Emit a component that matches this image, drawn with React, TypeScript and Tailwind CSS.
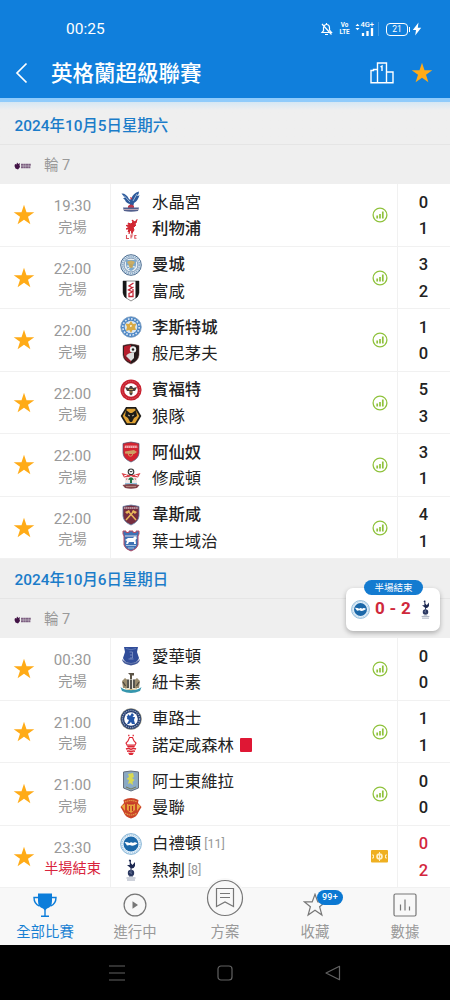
import type { ReactNode } from "react";

type Team = { name: string; crest: string; bold?: boolean; rank?: string; red?: boolean };
type Match = { time: string; home: Team; away: Team; score: [number, number]; live?: boolean };

const saturday: Match[] = [
  { time: "19:30", home: { name: "水晶宮", crest: "palace" }, away: { name: "利物浦", crest: "liverpool", bold: true }, score: [0, 1] },
  { time: "22:00", home: { name: "曼城", crest: "city", bold: true }, away: { name: "富咸", crest: "fulham" }, score: [3, 2] },
  { time: "22:00", home: { name: "李斯特城", crest: "leicester", bold: true }, away: { name: "般尼茅夫", crest: "bournemouth" }, score: [1, 0] },
  { time: "22:00", home: { name: "賓福特", crest: "brentford", bold: true }, away: { name: "狼隊", crest: "wolves" }, score: [5, 3] },
  { time: "22:00", home: { name: "阿仙奴", crest: "arsenal", bold: true }, away: { name: "修咸頓", crest: "southampton" }, score: [3, 1] },
  { time: "22:00", home: { name: "韋斯咸", crest: "westham", bold: true }, away: { name: "葉士域治", crest: "ipswich" }, score: [4, 1] },
];

const sunday: Match[] = [
  { time: "00:30", home: { name: "愛華頓", crest: "everton" }, away: { name: "紐卡素", crest: "newcastle" }, score: [0, 0] },
  { time: "21:00", home: { name: "車路士", crest: "chelsea" }, away: { name: "諾定咸森林", crest: "forest", red: true }, score: [1, 1] },
  { time: "21:00", home: { name: "阿士東維拉", crest: "villa" }, away: { name: "曼聯", crest: "united" }, score: [0, 0] },
  { time: "23:30", home: { name: "白禮頓", crest: "brighton", rank: "[11]" }, away: { name: "熱刺", crest: "spurs", rank: "[8]" }, score: [0, 2], live: true },
];

const shield = "M3 2.5Q11 -.5 19 2.5V12Q18.500 18 11 21Q3.500 18 3 12Z";

const crests: Record<string, ReactNode> = {
  palace: (
    <>
      <path d="M1.500 2.500Q6 2 9 8Q10 9 11 8Q13 2 19 .5Q19 4 17 5Q18.500 5 19.500 4Q18.500 9 14 12L13 16H9L10 13Q6 12 5 9L3 7L5 7Z" fill="#2d5a9b" />
      <path d="M4 4.500L10 11M17 3L13 10" stroke="#9fb9da" strokeWidth="1" />
      <path d="M10 6L12.500 7L11 9Z" fill="#c53245" />
      <path d="M8 15Q11 12 14 15V18H8Z" fill="#bd3a4c" />
      <path d="M3 16.500H19L18 20Q11 21.500 4 20Z" fill="#53608d" />
      <path d="M4 18.500H18" stroke="#b6a4b5" strokeWidth="1" />
    </>
  ),
  liverpool: (
    <>
      <path d="M12 2L15 4L17 1.500L16 5L14 6L16 7L14 9L13 9L14 12L12 15L11 12L8 14L9 11L6 11L9 9L6 7.500L9 7L8 5L11 6L13 4Z" fill="#d12732" stroke="#d12732" strokeWidth="1" />
      <path d="M10 11L9 16M12 13V16" stroke="#d12732" strokeWidth="1.200" />
      <path d="M6.500 17V20.500H9M11 20.500V17H13.200M11 18.700H12.500M16.500 17.500H14.800V20.300H16.500" fill="none" stroke="#da5058" strokeWidth="1.100" />
    </>
  ),
  city: (
    <>
      <circle cx="11" cy="11" r="10.300" fill="#e8f0f6" stroke="#365a82" strokeWidth=".9" />
      <circle cx="11" cy="11" r="8.600" fill="none" stroke="#8faecb" strokeWidth="1.900" strokeDasharray="1.500 .7" />
      <circle cx="11" cy="11" r="7" fill="#e8eef2" stroke="#4c7098" strokeWidth=".7" />
      <path d="M6 6H16V11Q15.500 15 11 17Q6.500 15 6 11Z" fill="#7da9cc" />
      <path d="M7 8Q11 5 15 8L13 11H9Z" fill="#c9ad66" />
      <path d="M7 12L15 13M8 15L12 12" stroke="#fff" strokeWidth="1" />
      <circle cx="11" cy="12" r="2" fill="#bfa45e" />
    </>
  ),
  fulham: (
    <>
      <path d="M3 1H19V13Q18 18 11 21Q4 18 3 13Z" fill="#fff" stroke="#222" strokeWidth=".5" />
      <path d="M3 1H6.500V18.500Q3.500 17 3 13ZM15.500 1H19V13Q18.500 17 15.500 18.500Z" fill="#171717" />
      <path d="M13.500 3L9 6L13 8M13.500 7L8.500 10L13 12V9M12.500 12L9 13.500V16.500H13V13" fill="none" stroke="#c42736" strokeWidth="1.300" />
    </>
  ),
  leicester: (
    <>
      <circle cx="11" cy="11" r="10.300" fill="#4c86c5" stroke="#7c9dbf" strokeWidth=".8" />
      <circle cx="11" cy="11" r="8.200" fill="none" stroke="#d5e4f3" strokeWidth="1.700" strokeDasharray="1.700 1.500" />
      <circle cx="11" cy="11" r="6.300" fill="#dbe7f2" />
      <path d="M11 5L13 8L16.500 7.500L15 11L16 14L12.500 14L11 17L9.300 14L6 15L7 11L5.500 7.500L9 8Z" fill="#d9aa46" />
      <path d="M10 9L12 9L11.500 11H10Z" fill="#f3e9cd" />
    </>
  ),
  bournemouth: (
    <>
      <path d={shield} fill="#25191a" stroke="#6a3c3c" strokeWidth=".5" />
      <path d="M4 3.500Q7 2 11 2V19.500Q5 17 4 12Z" fill="#b71d2c" />
      <path d="M4 14L9 10L11 19.500Q5.500 18 4 14Z" fill="#8d1825" />
      <path d="M6 13Q9 9 14 10L14 15L11 18L9 16Z" fill="#ddd" />
      <circle cx="13" cy="6.500" r="3.200" fill="#eee" />
      <circle cx="13" cy="6.500" r="1.200" fill="#222" />
    </>
  ),
  brentford: (
    <>
      <circle cx="11" cy="11" r="10.600" fill="#c8202e" />
      <circle cx="11" cy="11" r="8.800" fill="none" stroke="#de7f87" strokeWidth=".7" strokeDasharray="1 1" />
      <circle cx="11" cy="11" r="6.800" fill="#fff" />
      <path d="M5 8L9 9L10 7H12L13 9L17 8L15 12L12.500 12V15L11 16.500L9.500 15V12L7 12Z" fill="#4a423c" />
      <path d="M9 10.500H13M9.500 13H12.500" stroke="#c99b46" strokeWidth="1" />
    </>
  ),
  wolves: (
    <>
      <path d="M6 2H16L21.300 11L16 20H6L.7 11Z" fill="#1d1c18" />
      <path d="M7 3.700H15L19.300 11L15 18.300H7L2.700 11Z" fill="#dfa234" />
      <path d="M6 5L10 8H12L16 5L17 11L14 13L12 17H10L8 13L5 11Z" fill="#1d1c18" />
      <path d="M8 10L10 11M14 10L12 11" stroke="#e8dcc0" strokeWidth=".8" />
    </>
  ),
  arsenal: (
    <>
      <path d={shield} fill="#d42330" stroke="#485a78" strokeWidth=".7" />
      <path d="M4 7L18 7L17 4H5Z" fill="#dd5962" />
      <path d="M5 6H17" stroke="#fff" strokeWidth="1.200" strokeDasharray="1.400 .5" />
      <path d="M5 10.500L14 9L17 11L14 13H10L5 12.500Z" fill="#cf9f63" />
      <circle cx="10.500" cy="13" r="2.200" fill="none" stroke="#cf9f63" strokeWidth="1" />
    </>
  ),
  southampton: (
    <>
      <circle cx="11" cy="3.800" r="2.800" fill="#fff" stroke="#313131" strokeWidth="1.100" />
      <path d="M9.500 3L11 4L12.500 3" stroke="#222" strokeWidth="1" fill="none" />
      <path d="M1.500 5L9 7H13L20.500 5L18 9.500L13 9L11 8L9 9L4 9.500Z" fill="#d8424b" />
      <path d="M4 8L7 7M15 7L18 8" stroke="#fff" strokeWidth="1" />
      <path d="M5 9.500H17V15H5Z" fill="#f2e8e8" />
      <path d="M8 11.500Q11 7 14 11.500L12 12V15H10V12Z" fill="#227244" />
      <path d="M7 10L6.500 12M15 10L15.500 12" stroke="#d8808a" strokeWidth="1" />
      <path d="M5 16H17" stroke="#6ca7cb" strokeWidth="1.500" />
      <path d="M2.500 17Q11 15 19.500 17L17 20Q11 21.500 5 20Z" fill="#84444a" />
      <path d="M6 18.500H16" stroke="#c79f8f" strokeWidth=".7" />
    </>
  ),
  westham: (
    <>
      <path d={shield} fill="#762d3f" stroke="#6380a6" strokeWidth=".8" />
      <path d="M4 4H18" stroke="#cbb5bd" strokeWidth="1.300" strokeDasharray="1.500 .4" />
      <path d="M6 16L14 7M16 16L8 7" stroke="#e8b85b" strokeWidth="1.500" />
      <path d="M5 8L9 6L10 7.500L7 10ZM13 6L17 8L15 10L12 7.500Z" fill="#e8b85b" />
    </>
  ),
  ipswich: (
    <>
      <path d="M3 1H6V2.500H9V1H13V2.500H16V1H19V4L18 6V15Q17 19 11 21Q5 19 4 15V6L3 4Z" fill="#3f72b5" stroke="#b64c64" strokeWidth="1" />
      <path d="M5 5H17V7H5Z" fill="#8fa6ce" />
      <path d="M5 10L8 8L13 8L15 6L17 8L15.500 10L16 14H14V12H9L8 14H6L7 11Z" fill="#fff" />
      <path d="M6 15.500H16M8 18H14" stroke="#a8c2e0" strokeWidth="1" />
    </>
  ),
  everton: (
    <>
      <path d="M4 2H18L17 7L19 13Q18 17 11 19Q4 17 3 13L5 7Z" fill="#304c99" />
      <path d="M6 3.500Q11 6 16 3.500" fill="none" stroke="#5a74b4" strokeWidth="1" />
      <path d="M9.500 7H12.500V13H10M8.500 14H13.500M10 10H12" fill="none" stroke="#8598c8" strokeWidth=".8" />
      <path d="M2 14L4 16Q11 20 18 16L20 14Q20 19 11 20.500Q2 19 2 14Z" fill="#3d5496" />
      <path d="M4.500 17Q11 20 17.500 17" stroke="#7487b5" strokeWidth=".7" fill="none" />
    </>
  ),
  newcastle: (
    <>
      <path d="M8 1H14V3.500H12V7H10V3Z" fill="#5b5346" />
      <path d="M2 9L5 6L7.500 8L14.500 8L17 6L20 9L19 16H3Z" fill="#9b8d6f" />
      <path d="M7 7.500H15V15L11 18L7 15Z" fill="#e6e2d6" />
      <path d="M8 7.500V16M11 7.500V17.500M14 7.500V16" stroke="#292925" strokeWidth="1.500" />
      <path d="M3 10L5.500 14M19 10L16.500 14" stroke="#4f493c" strokeWidth="1.400" />
      <path d="M.5 15Q4 18.500 11 18Q18 18.500 21.500 15L20 19Q11 23 2 19Z" fill="#3696ad" />
      <path d="M5 16.500Q11 19 17 16.500" stroke="#d4c087" strokeWidth="1" fill="none" />
    </>
  ),
  chelsea: (
    <>
      <circle cx="11" cy="11" r="10.500" fill="#263f72" stroke="#a99c71" strokeWidth=".5" />
      <circle cx="11" cy="11" r="8.600" fill="none" stroke="#97a5bd" strokeWidth="1.300" strokeDasharray="1.200 1" />
      <circle cx="11" cy="11" r="6.800" fill="#fff" />
      <path d="M8 6L10 8L12 5L14 7L12.500 9L15 9L14 12L15 16H12L11 14L9 16H7L9 12L7 11Z" fill="#2356a8" />
      <path d="M7 8L9 11" stroke="#2356a8" strokeWidth="1" />
    </>
  ),
  forest: (
    <>
      <path d="M8 1.500H9.500M12.500 1.500H14" stroke="#e34550" strokeWidth="1.400" />
      <path d="M11 3.500H12.500L14 7L16 9L15 11H7L6 9L8 7L9.500 3.500Z" fill="#fff" stroke="#dd2734" strokeWidth="1.100" />
      <path d="M6.500 11.500H15.500L14 13.500H8Z" fill="#dd2734" />
      <path d="M6 15Q8.500 14 11 15.300Q13.500 14 16 15M7 17.200Q9 16.500 11 17.500Q13 16.500 15 17.200" stroke="#dd2734" strokeWidth="1.500" fill="none" />
      <path d="M8 18.700H14L12.500 21H9.500Z" fill="#dd2734" />
    </>
  ),
  villa: (
    <>
      <path d="M3.500 2Q11 0 18.500 2V18L11 21L3.500 18Z" fill="#8ba9c0" stroke="#667080" strokeWidth="1" />
      <path d="M5.500 4H16.500V16.500L11 19L5.500 16.500Z" fill="#89aac7" />
      <path d="M8 4L13 3L14 7L12 8L14.500 10L12.500 12L13 15L10 13L8 14L9 10L6.500 9L9 7Z" fill="#d9d951" />
      <path d="M6 17L11 19L16 17" fill="none" stroke="#797c58" strokeWidth="1" />
    </>
  ),
  united: (
    <>
      <path d="M3.500 3Q11 -1 18.500 3L18 6L21.500 10L18.500 15Q17 20 11 21.500Q5 20 3.500 15L.5 10L4 6Z" fill="#cb4428" />
      <path d="M5 5Q11 2 17 5M5 16Q11 20 17 16" fill="none" stroke="#e29b48" strokeWidth="1.200" strokeDasharray="1.500 .6" />
      <path d="M1.500 9L5 7V14Z" fill="#e9aa42" />
      <path d="M20.500 9L17 7V14Z" fill="#e9aa42" />
      <path d="M7 7H15V13L11 16L7 13Z" fill="#e7a33d" />
      <path d="M8 7H14M9.500 9V14M12.500 9V14" stroke="#bd2d28" strokeWidth="1.200" />
    </>
  ),
  brighton: (
    <>
      <circle cx="11" cy="11" r="10.400" fill="#e5f1fa" stroke="#5c99c5" strokeWidth=".7" />
      <circle cx="11" cy="11" r="9" fill="none" stroke="#9dc3df" strokeWidth="1.100" strokeDasharray="1 1" />
      <circle cx="11" cy="11" r="7.500" fill="#1b68a9" />
      <path d="M4.500 9Q8 9 9.500 10Q11 8.500 13 10Q15 8.500 17.500 10.500L15 12Q12 13.500 10 12L7 12.500L6 11Z" fill="#fff" />
    </>
  ),
  spurs: (
    <>
      <path d="M9.500 .5L11 1L10.800 4L12.500 6L15 3V7Q14 9.500 11.500 9.500L11.500 12H10.500V9L7 6L9.700 6L9.700 2.500L8.700 2Z" fill="#1c2851" />
      <circle cx="11" cy="14" r="3.200" fill="#29365f" />
      <path d="M9 13L12 15M11 11V14" stroke="#8290ae" strokeWidth=".6" />
      <path d="M9 17.500H13M6.500 19H15.500M7 21H15" stroke="#929baf" strokeWidth=".9" />
    </>
  ),
};

function Crest({ id, size = "h-[22px] w-[22px]" }: { id: string; size?: string }) {
  return (
    <svg viewBox="0 0 22 22" className={`${size} shrink-0`}>
      {crests[id]}
    </svg>
  );
}

function Star() {
  return (
    <svg viewBox="0 0 22 22" className="h-[22px] w-[22px]" fill="#ffab17">
      <path d="M11 .8L13.500 8.200H21.300L15 12.800L17.400 20.200L11 15.700L4.600 20.200L7 12.800L.7 8.200H8.500Z" />
    </svg>
  );
}

function StatsIcon() {
  return (
    <svg viewBox="0 0 16 16" className="h-4 w-4" fill="none" stroke="#8fc23c">
      <circle cx="8" cy="8" r="6.900" strokeWidth="1.300" />
      <path d="M5.200 11.500V8.500M8 11.500V7M10.800 11.500V4.500" strokeWidth="1.700" />
    </svg>
  );
}

function PitchIcon() {
  return (
    <svg viewBox="0 0 17 13" className="mr-px h-[13px] w-[17px]">
      <rect width="17" height="12.500" rx="1" fill="#efb021" />
      <path d="M1 5H2.500V8H1M16 5H14.500V8H16M8.500 2V11" fill="none" stroke="#fff1c9" strokeWidth="1" />
      <circle cx="8.500" cy="6.500" r="2.400" fill="none" stroke="#fff1c9" strokeWidth="1.800" />
    </svg>
  );
}

function TeamLine({ team }: { team: Team }) {
  return (
    <div className="flex h-[26.5px] items-center">
      <Crest id={team.crest} />
      <span className={`ml-[10px] pt-px text-[16.400px] leading-none whitespace-nowrap text-[#222] ${team.bold ? "font-medium" : ""}`}>
        {team.name}
      </span>
      {team.rank && <span className="ml-[3px] text-[12.500px] leading-none text-[#999]">{team.rank}</span>}
      {team.red && <span className="ml-[6px] h-[14px] w-3 rounded-[1px] bg-[#df1734]" />}
    </div>
  );
}

function MatchRow({ match }: { match: Match }) {
  return (
    <div className="flex h-[62.5px] border-b border-[#f1f1f1] bg-white">
      <div className="flex w-12 items-center justify-center pt-px">
        <Star />
      </div>
      <div className="flex w-[63px] flex-col items-center border-r border-[#f1f1f1] pt-3 pr-[13px] text-[14.200px] leading-[20.5px] whitespace-nowrap text-[#999]">
        <span className="text-[15px]">{match.time}</span>
        <span className={match.live ? "text-[#d9233c]" : ""}>{match.live ? "半場結束" : "完場"}</span>
      </div>
      <div className="flex-1 pt-[5px] pl-[9px]">
        <TeamLine team={match.home} />
        <TeamLine team={match.away} />
      </div>
      <div className="flex w-[35px] items-center justify-center pt-px">
        {match.live ? <PitchIcon /> : <StatsIcon />}
      </div>
      <div className={`w-[53px] border-l border-[#f1f1f1] pt-[5.500px] pr-px text-center text-[16.500px] leading-[26.5px] font-medium ${match.live ? "text-[#d3263d]" : "text-[#222]"}`}>
        <div>{match.score[0]}</div>
        <div>{match.score[1]}</div>
      </div>
    </div>
  );
}

function Round({ className }: { className: string }) {
  return (
    <div className={`flex items-center bg-[#efefef] pt-[2px] pl-[14px] text-[14.500px] text-[#999] ${className}`}>
      <svg viewBox="0 0 18 8" className="h-2 w-[18px]">
        <path d="M1 2L2.500 2.500L3 .5L4.500 2L6 1L5.500 3L6 5L4 7.500L1.500 6.500L.5 4Z" fill="#421346" />
        <path d="M7 2.700H17M7 5.300H16.500" stroke="#7e6182" strokeWidth="2" strokeDasharray="2.200 .2" />
      </svg>
      <span className="ml-3">輪 7</span>
    </div>
  );
}

function StatusIcons() {
  return (
    <div className="flex h-5 items-center text-white">
      <svg viewBox="0 0 13 14" className="h-[14px] w-[13px]" fill="none" stroke="currentColor" strokeWidth="1.200">
        <path d="M3.500 9.500V5.500Q4 2.500 6.500 2.500Q9.500 2.500 9.500 6V8L11.500 10.500H2L4 8M6.500 2.500V1M5 12.500H8M2 2L11.500 12.500" />
      </svg>
      <span className="ml-[6px] flex w-[11px] scale-x-90 flex-col items-center text-[7px] leading-[7px] font-bold">
        <span>Vo</span>
        <span>LTE</span>
      </span>
      <div className="ml-[5px] flex w-[22px] items-start">
        <svg viewBox="0 0 5 8" className="mt-px h-2 w-[5px]" fill="currentColor">
          <path d="M.5 3L2.500 .8L4.500 3ZM.5 5L2.500 7.200L4.500 5Z" />
        </svg>
        <div className="flex flex-col items-end">
          <span className="text-[7.500px] leading-[6px] font-medium">4G+</span>
          <svg viewBox="0 0 14 8" className="h-2 w-[14px]" stroke="currentColor" strokeWidth="2.300">
            <path d="M3 8V5M7.500 8V3M12 8V0" />
          </svg>
        </div>
      </div>
      <svg viewBox="0 0 1 14" className="ml-px h-[14px] w-px" stroke="#3f98e2"><path d="M.5 0V14" /></svg>
      <div className="ml-[7px] flex h-[13px] w-[22px] items-center justify-center rounded-[4px] border border-white text-[8.500px] leading-none">21</div>
      <span className="ml-px h-[5px] w-px bg-white" />
      <svg viewBox="0 0 10 14" className="ml-[2px] h-[14px] w-[10px]" fill="currentColor">
        <path d="M6.500 .5L.8 8H4L3.200 13.500L9.200 5.800H5.800Z" />
      </svg>
    </div>
  );
}

const tabs: { label: string; icon: ReactNode; active?: boolean }[] = [
  {
    label: "全部比賽",
    active: true,
    icon: (
      <svg viewBox="0 0 24 24" className="h-6 w-6">
        <path d="M5 .5H19V8Q19 14 14 15.500L12 17.500L10 15.500Q5 14 5 8Z" fill="#0c7dda" />
        <path d="M5 4.500H1Q1 11 6.500 13M19 4.500H23Q23 11 17.500 13M12 16V23M8 23.200H16" fill="none" stroke="#0c7dda" strokeWidth="1.400" />
      </svg>
    ),
  },
  {
    label: "進行中",
    icon: (
      <svg viewBox="0 0 24 24" className="h-6 w-6">
        <circle cx="12" cy="12" r="10.900" fill="none" stroke="#777" strokeWidth="1.200" />
        <path d="M9.500 8.200L15 12L9.500 15.800Z" fill="#777" />
      </svg>
    ),
  },
  {
    label: "方案",
    icon: (
      <svg viewBox="0 0 40 40" className="-mt-[15px] h-10 w-10 shrink-0" fill="none" stroke="#777" strokeWidth="1.200">
        <circle cx="20" cy="20" r="20" fill="#f8f8f8" stroke="none" />
        <circle cx="20" cy="20" r="17.500" />
        <path d="M11.500 10.500H28.500V28.500L20 24L11.500 28.500ZM15 15.500H25M15 19.500H25" />
      </svg>
    ),
  },
  {
    label: "收藏",
    icon: (
      <div className="relative">
        <svg viewBox="0 0 24 24" className="h-6 w-6" fill="none" stroke="#777" strokeWidth="1.200">
          <path d="M12 1.300L14.800 8.900H22.500L16.600 13.700L18.900 22L12 17.300L5.100 22L7.400 13.700L1.500 8.900H9.200Z" />
        </svg>
        <span className="absolute -top-[3px] left-[14px] flex h-[14.500px] w-[26px] items-center justify-center rounded-full bg-[#0b78d2] text-[9px] font-medium tracking-[0.3px] text-white">
          99+
        </span>
      </div>
    ),
  },
  {
    label: "數據",
    icon: (
      <svg viewBox="0 0 24 24" className="h-6 w-6" fill="none" stroke="#777" strokeWidth="1.200">
        <rect x="1" y="1" width="22" height="22" rx="1.500" />
        <path d="M7.500 17.500V11.500M12 17.500V6.500M16.500 17.500V13.500" />
      </svg>
    ),
  },
];

export default function App() {
  return (
    <div className="relative flex h-[1000px] w-[450px] flex-col overflow-hidden bg-[#efefef] font-['Roboto','Noto_Sans_CJK_TC',sans-serif]">
      <header className="h-[98px] shrink-0 bg-[#107fdc] text-white">
        <div className="flex h-[58px] items-center justify-between pr-[28px] pl-[66px]">
          <span className="pt-px text-[15.500px]">00:25</span>
          <StatusIcons />
        </div>
        <div className="flex h-[30px] items-center pr-[16px] pl-[15px]">
          <svg viewBox="0 0 14 22" className="h-[22px] w-[14px]" fill="none" stroke="currentColor" strokeWidth="1.700">
            <path d="M11.500 1.500L2 11L11.500 20.500" />
          </svg>
          <h1 className="ml-[22px] pt-[2px] text-[21.500px] leading-none font-medium">英格蘭超級聯賽</h1>
          <svg viewBox="0 0 24 22" className="ml-auto h-[22px] w-6" fill="none" stroke="currentColor" strokeWidth="1.400">
            <path d="M7.500 20.700V1H16.500V20.700M7.500 7.500H3.500V8.500H1V20.700H23V10H16.500M10.500 5L12 4V9" />
          </svg>
          <span className="ml-[17px] mr-px">
            <Star />
          </span>
        </div>
      </header>
      <div className="h-1 shrink-0 bg-[#8fcbfb]" />

      <main className="h-[785.5px] shrink-0">
        <div className="flex h-[43px] items-center border-b border-[#e5e5e5] bg-linear-to-b from-[#d5e7f4] to-[#efefef] to-20% pt-[7px] pl-[14.500px] text-[15.400px] font-medium text-[#1b7cc9]">
          2024年10月5日星期六
        </div>
        <Round className="h-[39px]" />
        {saturday.map((match) => (
          <MatchRow key={match.home.name} match={match} />
        ))}
        <div className="flex h-10 items-center border-b border-[#e5e5e5] pt-[4px] pl-[14.500px] text-[15.400px] font-medium text-[#1b7cc9]">
          2024年10月6日星期日
        </div>
        <Round className="h-[39px]" />
        {sunday.map((match) => (
          <MatchRow key={match.home.name} match={match} />
        ))}
      </main>

      <nav className="grid h-[57.5px] shrink-0 grid-cols-5 bg-[#f8f8f8]">
        {tabs.map((tab) => (
          <div key={tab.label} className={`flex flex-col items-center justify-between pt-[5.5px] pb-[2px] ${tab.active ? "text-[#1780d3]" : "text-[#999]"}`}>
            {tab.icon}
            <span className="text-[14.400px] leading-5">{tab.label}</span>
          </div>
        ))}
      </nav>

      <div className="flex h-[55px] shrink-0 items-center justify-center gap-[92px] bg-black">
        <svg viewBox="0 0 16 16" className="h-4 w-4" stroke="#626262" strokeWidth="1.200">
          <path d="M0 1H16M0 8H16M0 15H16" />
        </svg>
        <svg viewBox="0 0 16 16" className="h-4 w-4" fill="none" stroke="#626262" strokeWidth="1.200">
          <rect x="1" y="1" width="14" height="14" rx="3" />
        </svg>
        <svg viewBox="0 0 16 16" className="h-4 w-4" fill="none" stroke="#626262" strokeWidth="1.200" strokeLinejoin="round">
          <path d="M14.500 1.300V14.700L1 8Z" />
        </svg>
      </div>

      {/* floating live score */}
      <div className="absolute top-[587.5px] left-[346px] flex h-[43px] w-[94px] items-center justify-between rounded-[7px] bg-white px-[5px] shadow-[0_2px_5px_rgba(0,0,0,0.28)]">
        <span className="absolute -top-[7.5px] left-[18px] flex h-[15px] w-[59px] items-center justify-center rounded-full bg-[#147bd0] text-[9.500px] leading-none whitespace-nowrap text-white">
          半場結束
        </span>
        <Crest id="brighton" size="h-[19px] w-[19px]" />
        <span className="text-[17px] font-bold tracking-[0.3px] whitespace-nowrap text-[#cf293b]">0 - 2</span>
        <Crest id="spurs" size="h-[19px] w-[19px]" />
      </div>
    </div>
  );
}
